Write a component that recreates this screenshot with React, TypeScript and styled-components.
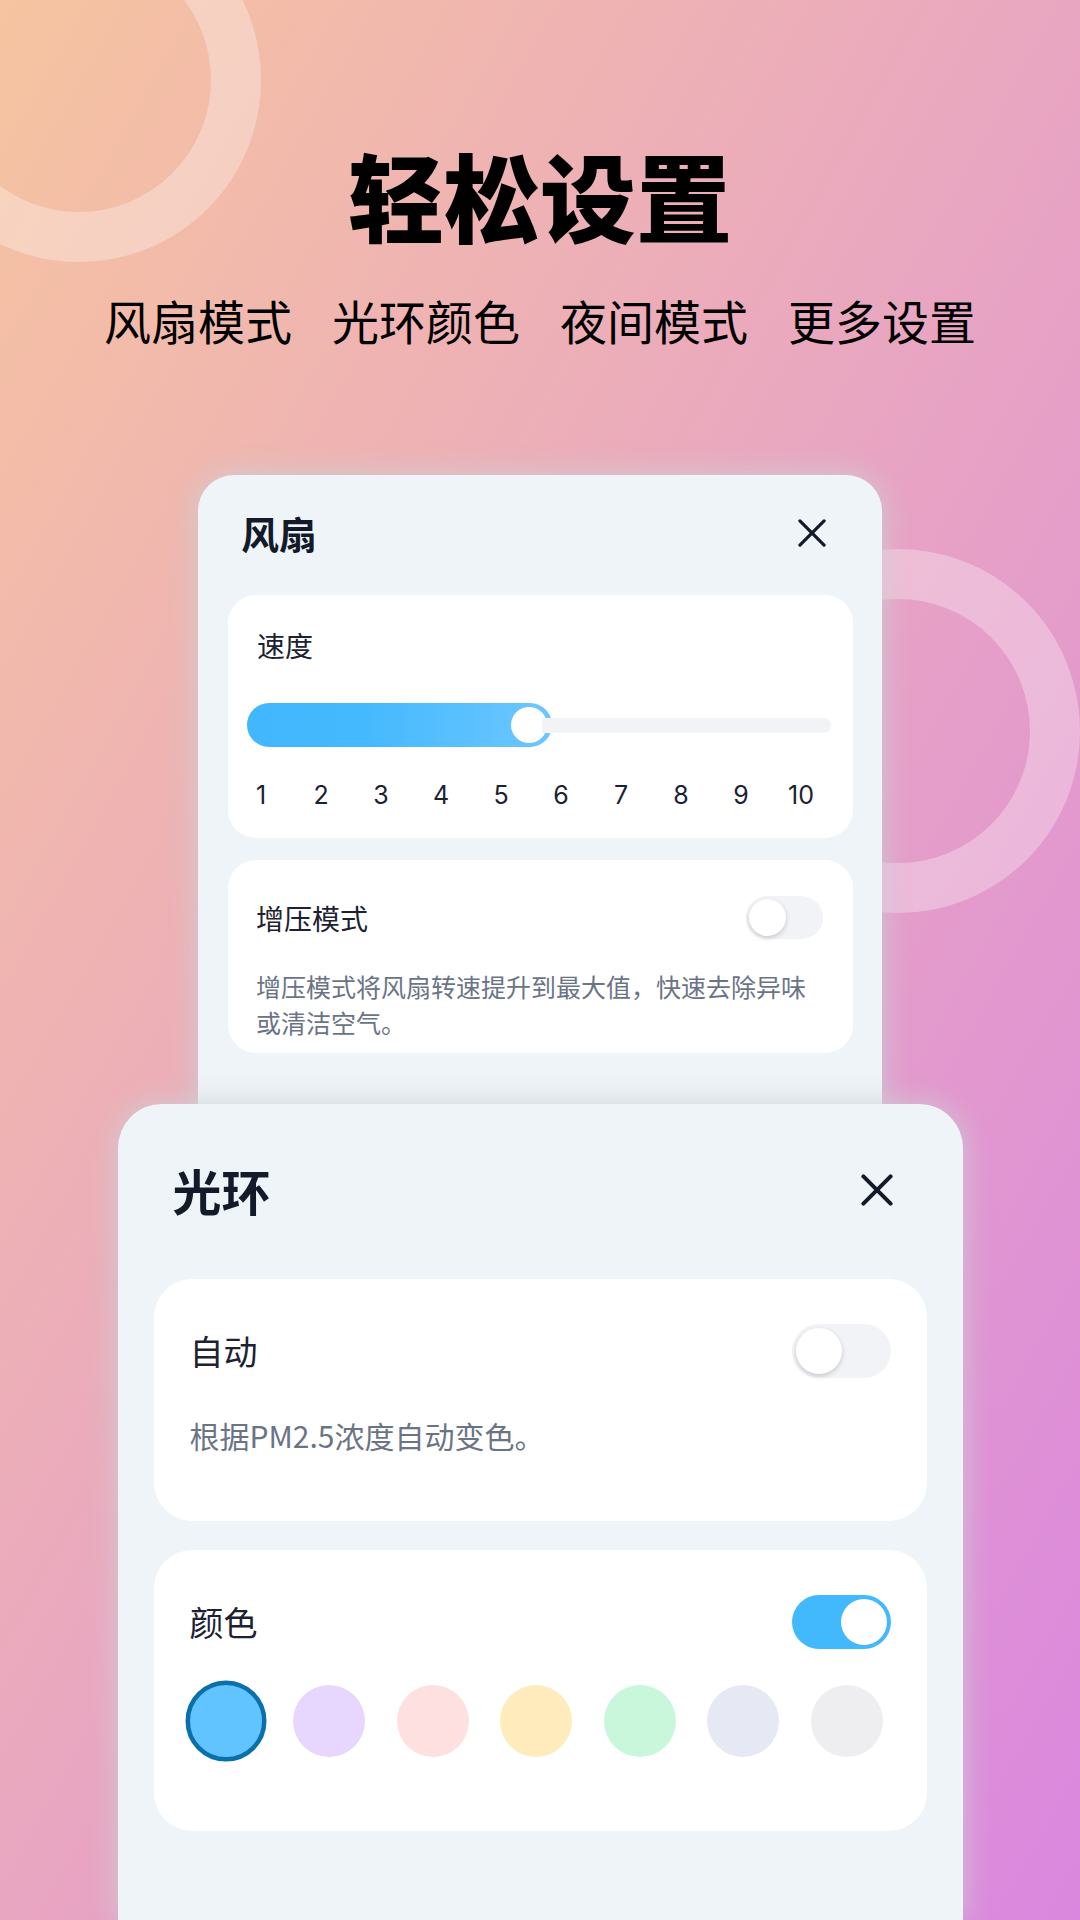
import React from "react";
import styled, { createGlobalStyle } from "styled-components";

const GlobalStyle = createGlobalStyle`
  html, body {
    margin: 0;
    padding: 0;
  }
  body {
    font-family: "Noto Sans CJK SC", "Noto Sans", sans-serif;
  }
`;

const Page = styled.div`
  position: relative;
  width: 1080px;
  height: 1920px;
  overflow: hidden;
  display: flex;
  flex-direction: column;
  align-items: center;
  padding-top: 146px;
  box-sizing: border-box;
  background: linear-gradient(to bottom right, #f6c4a0 0%, #e9a6c1 50%, #da87df 100%);
`;

const Ring = styled.div<{ left: number; top: number }>`
  position: absolute;
  left: ${(p) => p.left}px;
  top: ${(p) => p.top}px;
  width: 364px;
  height: 364px;
  box-sizing: border-box;
  border-radius: 50%;
  border: 50px solid rgba(255, 255, 255, 0.3);
`;

const Title = styled.h1`
  position: relative;
  margin: 0;
  font-size: 96px;
  line-height: 96px;
  font-weight: 900;
  color: #000;
`;

const Features = styled.div`
  position: relative;
  display: flex;
  gap: 40px;
  margin-top: 54px;
  font-size: 47px;
  line-height: 47px;
  color: #000;
`;

const FanCard = styled.section`
  position: relative;
  width: 684px;
  margin-top: 132px;
  padding: 0 29px 87px 30px;
  box-sizing: border-box;
  border-radius: 36px;
  background: #eff4f8;
  box-shadow: 0 0 30px rgba(205, 208, 214, 0.9);
`;

const HaloCard = styled.section`
  position: relative;
  flex: 1;
  width: 845px;
  margin-top: -36px;
  padding: 0 36px;
  box-sizing: border-box;
  border-radius: 44px 44px 0 0;
  background: #eff4f8;
  box-shadow: 0 0 30px rgba(205, 208, 214, 0.9);
`;

const Header = styled.header<{ h: number; pl: number; pr: number }>`
  display: flex;
  align-items: center;
  justify-content: space-between;
  height: ${(p) => p.h}px;
  padding: 0 ${(p) => p.pr}px 4px ${(p) => p.pl}px;
  box-sizing: border-box;
`;

const CardTitle = styled.h2<{ size: number }>`
  margin: 0;
  font-size: ${(p) => p.size}px;
  line-height: 1;
  font-weight: 700;
  color: #131a2a;
`;

const Panel = styled.div<{ pad: string; radius: number; mt?: number }>`
  background: #fff;
  border-radius: ${(p) => p.radius}px;
  padding: ${(p) => p.pad};
  margin-top: ${(p) => p.mt || 0}px;
`;

const Label = styled.div<{ size: number; ml?: number }>`
  font-size: ${(p) => p.size}px;
  line-height: ${(p) => p.size}px;
  color: #1c2232;
  margin-left: ${(p) => p.ml || 0}px;
`;

const Row = styled.div<{ h: number }>`
  display: flex;
  align-items: center;
  justify-content: space-between;
  height: ${(p) => p.h}px;
`;

const Desc = styled.p<{ size: number; lh: number; mt: number }>`
  margin: ${(p) => p.mt}px 0 0;
  font-size: ${(p) => p.size}px;
  line-height: ${(p) => p.lh}px;
  color: #6b7487;
`;

const Slider = styled.div`
  display: flex;
  align-items: center;
  height: 44px;
  margin: 44px 22px 0 19px;
`;

const Fill = styled.div`
  display: flex;
  align-items: center;
  justify-content: flex-end;
  height: 44px;
  padding: 0 5px;
  box-sizing: border-box;
  border-radius: 22px;
  background: linear-gradient(90deg, #42b7fd 0%, #45b9fe 38%, #6cc7ff 100%);
`;

const Thumb = styled.div`
  width: 36px;
  height: 36px;
  border-radius: 50%;
  background: #fff;
`;

const Track = styled.div`
  flex: 1;
  height: 15px;
  margin-left: -10px;
  border-radius: 0 8px 8px 0;
  background: #f1f3f7;
`;

const Ticks = styled.div`
  display: grid;
  grid-template-columns: repeat(10, 60px);
  justify-items: center;
  margin: 36px 0 0 3px;
  font-family: Inter, "Open Sans", sans-serif;
  font-size: 25px;
  line-height: 25px;
  color: #1c2232;
`;

const ToggleTrack = styled.div<{ w: number; h: number; on?: boolean; inset: number }>`
  display: flex;
  align-items: center;
  justify-content: ${(p) => (p.on ? "flex-end" : "flex-start")};
  width: ${(p) => p.w}px;
  height: ${(p) => p.h}px;
  padding: 0 ${(p) => p.inset}px;
  box-sizing: border-box;
  border-radius: ${(p) => p.h / 2}px;
  background: ${(p) => (p.on ? "#42b8fd" : "#f1f3f7")};
`;

const Knob = styled.div<{ d: number; on?: boolean }>`
  width: ${(p) => p.d}px;
  height: ${(p) => p.d}px;
  border-radius: 50%;
  background: #fff;
  box-shadow: ${(p) => (p.on ? "none" : "0 2px 5px rgba(0, 0, 0, 0.18)")};
`;

const Swatches = styled.div`
  display: flex;
  gap: 31.5px;
  margin-top: 36px;
`;

const Swatch = styled.div<{ color: string; selected?: boolean }>`
  width: 72px;
  height: 72px;
  box-sizing: border-box;
  border-radius: 50%;
  background: ${(p) => p.color};
  border: ${(p) => (p.selected ? "4px solid #0a70ab" : "none")};
  transform: ${(p) => (p.selected ? "scale(1.125)" : "none")};
`;

const CloseIcon = ({ size, stroke }: { size: number; stroke: number }) => {
  const a = stroke * 0.6;
  const b = size - a;
  return (
    <svg width={size} height={size} viewBox={`0 0 ${size} ${size}`}>
      <g stroke="#131a2a" strokeWidth={stroke} strokeLinecap="round">
        <line x1={a} y1={a} x2={b} y2={b} />
        <line x1={b} y1={a} x2={a} y2={b} />
      </g>
    </svg>
  );
};

const Toggle = ({ big, on }: { big?: boolean; on?: boolean }) =>
  big ? (
    <ToggleTrack w={99} h={54} inset={4} on={on}>
      <Knob d={46} on={on} />
    </ToggleTrack>
  ) : (
    <ToggleTrack w={77} h={43} inset={3} on={on}>
      <Knob d={37} on={on} />
    </ToggleTrack>
  );

const features = ["风扇模式", "光环颜色", "夜间模式", "更多设置"];
const ticks = [1, 2, 3, 4, 5, 6, 7, 8, 9, 10];
const colors = ["#61c4ff", "#e7d6fd", "#ffe0e0", "#ffebbb", "#c9f7db", "#e6e8f4", "#eeeef0"];

const App = () => {
  return (
    <>
      <GlobalStyle />
      <Page>
        <Ring left={-103} top={-102} />
        <Ring left={716} top={549} />
        <Title>轻松设置</Title>
        <Features>
          {features.map((f) => (
            <span key={f}>{f}</span>
          ))}
        </Features>

        <FanCard>
          <Header h={120} pl={13} pr={27}>
            <CardTitle size={38}>风扇</CardTitle>
            <CloseIcon size={28} stroke={3.2} />
          </Header>
          <Panel pad="36px 0 30px 0" radius={28}>
            <Label size={28} ml={29}>
              速度
            </Label>
            <Slider>
              <Fill style={{ width: 305 }}>
                <Thumb />
              </Fill>
              <Track />
            </Slider>
            <Ticks>
              {ticks.map((t) => (
                <span key={t}>{t}</span>
              ))}
            </Ticks>
          </Panel>
          <Panel pad="36px 30px 13px 28px" radius={28} mt={22}>
            <Row h={43}>
              <Label size={28}>增压模式</Label>
              <Toggle />
            </Row>
            <Desc size={25} lh={36} mt={29}>
              增压模式将风扇转速提升到最大值，快速去除异味或清洁空气。
            </Desc>
          </Panel>
        </FanCard>

        <HaloCard>
          <Header h={175} pl={19} pr={34}>
            <CardTitle size={49}>光环</CardTitle>
            <CloseIcon size={32} stroke={4} />
          </Header>
          <Panel pad="45px 36px 66px 36px" radius={38}>
            <Row h={54}>
              <Label size={34}>自动</Label>
              <Toggle big />
            </Row>
            <Desc size={30} lh={40} mt={37}>
              根据PM2.5浓度自动变色。
            </Desc>
          </Panel>
          <Panel pad="45px 36px 74px 36px" radius={38} mt={29}>
            <Row h={54}>
              <Label size={34}>颜色</Label>
              <Toggle big on />
            </Row>
            <Swatches>
              {colors.map((c, i) => (
                <Swatch key={c} color={c} selected={i === 0} />
              ))}
            </Swatches>
          </Panel>
        </HaloCard>
      </Page>
    </>
  );
};

export default App;
